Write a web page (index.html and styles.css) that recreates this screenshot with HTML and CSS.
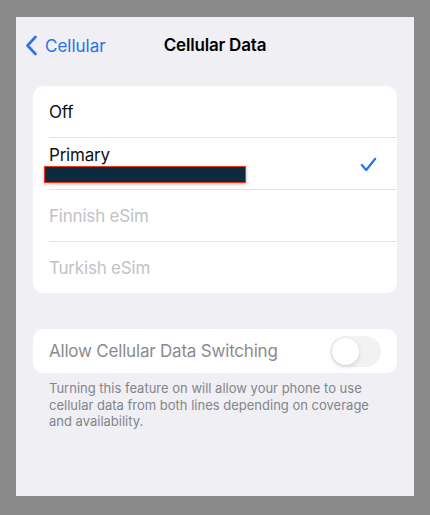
FILE: index.html
```html
<!DOCTYPE html>
<html lang="en">
<head>
  <meta charset="UTF-8">
  <title>Cellular Data</title>
  <link rel="stylesheet" href="styles.css">
</head>
<body>
  <div class="screen">
    <header class="nav">
      <a class="back" href="#">
        <svg class="chevron" width="13" height="21" viewBox="0 0 13 21">
          <path d="M10.5 2 L2.5 10.5 L10.5 19" fill="none" stroke="currentColor" stroke-width="2.6" stroke-linecap="round" stroke-linejoin="round"/>
        </svg>
        <span>Cellular</span>
      </a>
      <h1>Cellular Data</h1>
    </header>

    <ul class="group">
      <li class="row">Off</li>
      <li class="row primary">
        <div class="label">
          <span>Primary</span>
          <span class="redacted"></span>
        </div>
        <svg class="check" width="17" height="15" viewBox="0 0 17 15">
          <path d="M1.8 8 L6.2 13 L15.2 1.8" fill="none" stroke="currentColor" stroke-width="2.2" stroke-linecap="round" stroke-linejoin="round"/>
        </svg>
      </li>
      <li class="row disabled">Finnish eSim</li>
      <li class="row disabled">Turkish eSim</li>
    </ul>

    <div class="group switch-group">
      <div class="row switch-row">
        <span>Allow Cellular Data Switching</span>
        <span class="toggle"><span class="knob"></span></span>
      </div>
    </div>
    <p class="footnote">Turning this feature on will allow your phone to use cellular data from both lines depending on coverage and availability.</p>
  </div>
</body>
</html>
```
FILE: styles.css
```css
body {
  margin: 0;
  padding: 17px 16px 19px;
  background-color: #8a8a8a;
  font-family: 'Inter', 'Liberation Sans', sans-serif;
  -webkit-font-smoothing: antialiased;
}
.screen {
  height: 479px;
  background-color: #efeff4;
  padding: 0 17px;
  box-sizing: border-box;
  overflow: hidden;
}
.nav {
  position: relative;
  height: 56px;
  display: flex;
  align-items: center;
  justify-content: center;
  margin: 0 -17px 13px;
}
.back {
  position: absolute;
  left: 9px;
  top: 18px;
  display: flex;
  align-items: center;
  gap: 7px;
  color: #2a72f0;
  text-decoration: none;
  font-size: 17px;
}
.chevron {
  display: block;
}
.nav h1 {
  margin: 0;
  font-size: 17px;
  font-weight: 600;
  color: #000;
  letter-spacing: -0.2px;
}
.group {
  list-style: none;
  margin: 0;
  padding: 0 0 0 16px;
  background-color: #fff;
  border-radius: 10px;
}
.row {
  height: 51px;
  display: flex;
  align-items: center;
  justify-content: space-between;
  padding-right: 20px;
  font-size: 17px;
  color: #111;
  border-bottom: 1px solid #e3e3e6;
  letter-spacing: -0.2px;
}
.row:last-child {
  border-bottom: none;
}
.primary {
  align-items: flex-start;
}
.label {
  display: flex;
  flex-direction: column;
  padding-top: 7px;
  line-height: 21px;
}
.redacted {
  display: block;
  width: 200px;
  height: 15px;
  margin: 0 0 0 -5px;
  background-color: #0d2b3e;
  border: 1px solid #e8391e;
  box-shadow: 0 1px 3px rgba(0, 0, 0, 0.3);
}
.check {
  color: #2a72f0;
  margin-top: 19px;
}
.disabled {
  color: #c2c2c6;
}
.switch-group {
  margin-top: 36px;
}
.switch-row {
  height: 44px;
  color: #8a8a8e;
  padding-right: 16px;
}
.toggle {
  position: relative;
  width: 51px;
  height: 31px;
  border-radius: 16px;
  background-color: #f2f2f4;
}
.knob {
  position: absolute;
  left: 2px;
  top: 2px;
  width: 27px;
  height: 27px;
  border-radius: 50%;
  background-color: #fff;
  box-shadow: 0 2px 5px rgba(0, 0, 0, 0.12), 0 0 1px rgba(0, 0, 0, 0.08);
}
.footnote {
  margin: 7px 0 0 16px;
  padding-right: 16px;
  font-size: 13px;
  line-height: 16.5px;
  color: #85858a;
}
```
